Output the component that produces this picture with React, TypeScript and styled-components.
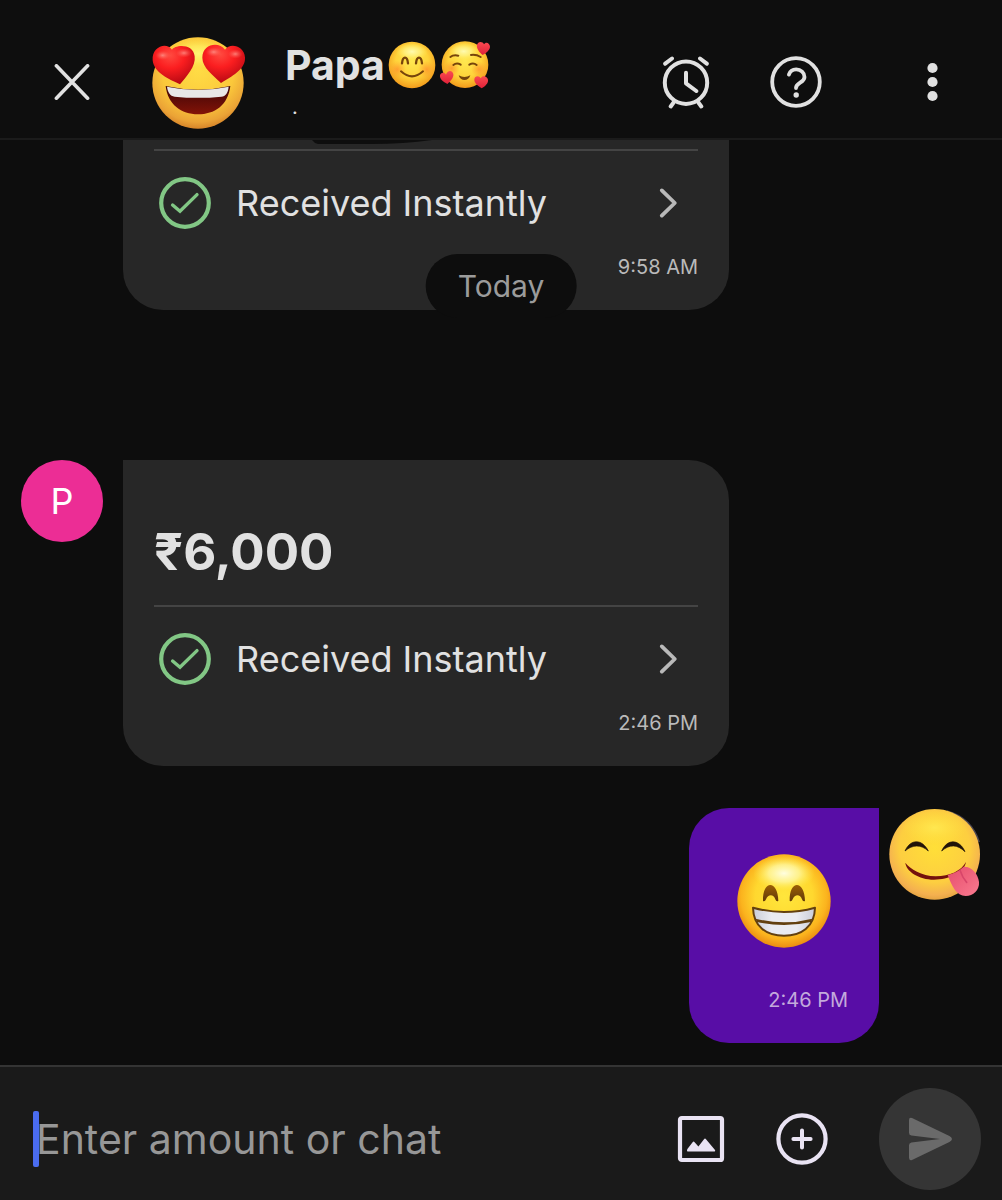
import React from "react";
import styled, { createGlobalStyle } from "styled-components";

const GlobalStyle = createGlobalStyle`
  *, *::before, *::after { box-sizing: border-box; }
  body {
    margin: 0;
    background: #0d0d0d;
    color: #e1e1e1;
    font-family: Inter, "Noto Sans", sans-serif;
  }
  button, input { font: inherit; color: inherit; }
`;

const Screen = styled.div`
  display: flex;
  flex-direction: column;
  height: 100vh;
  overflow: hidden;
`;

/* ---------- Header ---------- */

const Header = styled.header`
  display: flex;
  align-items: center;
  flex: none;
  padding: 34px 32px 8px 34px;
  background: #0e0e0e;
  border-bottom: 2px solid #1b1b1b;
`;

const IconButton = styled.button<{ $width?: number }>`
  display: flex;
  align-items: center;
  justify-content: center;
  flex: none;
  width: ${(p) => p.$width ?? 52}px;
  height: 76px;
  padding: 0;
  border: 0;
  background: none;
  cursor: pointer;
`;

const Contact = styled.div`
  display: flex;
  align-items: flex-start;
  gap: 40px;
  flex: 1;
  min-width: 0;
  margin-left: 41px;
`;

const ContactAvatar = styled.div`
  flex: none;
  padding-top: 2px;
  line-height: 0;
`;

const ContactText = styled.div`
  padding-top: 5px;
`;

const ContactName = styled.h1`
  display: flex;
  align-items: center;
  gap: 3px;
  height: 52px;
  margin: 0;
  font-size: 41px;
  line-height: 52px;
  font-weight: 700;
`;

const ContactStatus = styled.p`
  margin: 0;
  padding-left: 7px;
  font-size: 20px;
  line-height: 32px;
`;

const HeaderActions = styled.div`
  display: flex;
  align-items: center;
  gap: 58px;
`;

const MoreSlot = styled.div`
  margin-left: 14px;
`;

/* ---------- Conversation ---------- */

const Chat = styled.main`
  position: relative;
  display: flex;
  flex-direction: column;
  flex: 1;
  min-height: 0;
  overflow: hidden;
`;

const MessageRow = styled.div<{ $own?: boolean; $gap?: number }>`
  display: flex;
  align-items: flex-start;
  flex: none;
  justify-content: ${(p) => (p.$own ? "flex-end" : "flex-start")};
  gap: ${(p) => (p.$own ? 10 : 20)}px;
  margin-top: ${(p) => p.$gap ?? 0}px;
  padding: 0 21px;
`;

const AvatarSlot = styled.div`
  flex: none;
  width: 82px;
`;

const LetterAvatar = styled.div`
  display: flex;
  align-items: center;
  justify-content: center;
  height: 82px;
  border-radius: 50%;
  background: #ec2d95;
  color: #fff;
  font-size: 36px;
`;

const PaymentCard = styled.article<{ $continued?: boolean }>`
  flex: 1;
  max-width: 606px;
  padding: ${(p) => (p.$continued ? "9px 31px 31px" : "60px 31px 31px")};
  border-radius: ${(p) => (p.$continued ? "0 0 40px 40px" : "0 40px 40px 40px")};
  background: #272727;
`;

const Amount = styled.p`
  margin: 0 0 21px;
  font-size: 51px;
  line-height: 64px;
  font-weight: 700;
`;

const StatusButton = styled.button`
  display: flex;
  align-items: center;
  gap: 25px;
  width: 100%;
  height: 106px;
  padding: 0 19px 0 5px;
  border: 0;
  border-top: 2px solid #444;
  background: none;
  font-size: 36px;
  text-align: left;
  cursor: pointer;
`;

const StatusText = styled.span`
  flex: 1;
`;

const Time = styled.time<{ $own?: boolean }>`
  display: block;
  font-size: 20px;
  line-height: 24px;
  text-align: right;
  color: ${(p) => (p.$own ? "#c3a9dc" : "#bababa")};
`;

const EmojiBubble = styled.article`
  display: flex;
  flex-direction: column;
  gap: 40px;
  min-width: 190px;
  padding: 46px 31px 31px;
  border-radius: 40px 0 40px 40px;
  background: #580da6;
`;

const BubbleEmoji = styled.div`
  display: flex;
  justify-content: center;
  line-height: 0;
`;

const DatePill = styled.div`
  position: absolute;
  top: 114px;
  left: 50%;
  transform: translateX(-50%);
  padding: 0 32px;
  border-radius: 32px;
  background: #0d0d0d;
  color: #9b9b9b;
  font-size: 30px;
  line-height: 64px;
`;

const HeaderShade = styled.svg`
  position: absolute;
  top: 0;
  left: 312px;
`;

/* ---------- Composer ---------- */

const Composer = styled.form`
  display: flex;
  align-items: center;
  flex: none;
  margin: 0;
  padding: 21px 21px 10px 36px;
  border-top: 2px solid #343434;
  background: #1a1a1a;
`;

const InputWrap = styled.label`
  position: relative;
  display: flex;
  flex: 1;
  min-width: 0;
`;

const Caret = styled.span`
  position: absolute;
  left: -3px;
  top: 0;
  width: 6px;
  height: 56px;
  border-radius: 2px;
  background: #4a6cf0;
`;

const MessageInput = styled.input`
  width: 100%;
  height: 56px;
  padding: 0;
  border: 0;
  outline: 0;
  background: none;
  font-size: 41px;
  &::placeholder { color: #979797; opacity: 1; }
`;

const ComposerActions = styled.div`
  display: flex;
  align-items: center;
  gap: 49px;
`;

const SendButton = styled.button`
  display: flex;
  align-items: center;
  justify-content: center;
  width: 102px;
  height: 102px;
  margin-left: 2px;
  padding: 0;
  border: 0;
  border-radius: 50%;
  background: #353535;
`;

/* ---------- Icons ---------- */

const CloseIcon = () => (
  <svg width="36" height="36" viewBox="0 0 36 36" fill="none" stroke="#e1e1e1" strokeWidth="3.6" strokeLinecap="round">
    <path d="M2.4 1.8 33.6 34.2M33.6 1.8 2.4 34.2" />
  </svg>
);

const AlarmIcon = () => (
  <svg width="52" height="54" viewBox="0 0 52 54" fill="none" stroke="#e1e1e1" strokeWidth="4" strokeLinecap="round" strokeLinejoin="round">
    <circle cx="26" cy="27.7" r="21.2" />
    <path d="M26 17.7v10.6l10.3 7.7M5.2 8.7 12 3.5M46.8 8.7 40 3.5M13.6 47.5 10.7 51.5M38.4 47.5 41.3 51.5" />
  </svg>
);

const HelpIcon = () => (
  <svg width="52" height="52" viewBox="0 0 52 52" fill="none" stroke="#e1e1e1" strokeWidth="3.8" strokeLinecap="round" strokeLinejoin="round">
    <circle cx="26" cy="26" r="23.8" />
    <path d="M18.9 18.6c1-3.2 3.8-5.2 7.3-5.2 4.7 0 8.3 3.3 8.3 7.5 0 5.8-8.5 5.7-8.5 11.1" />
    <circle cx="26.2" cy="39" r="2.7" fill="#e1e1e1" stroke="none" />
  </svg>
);

const MoreIcon = () => (
  <svg width="12" height="40" viewBox="0 0 12 40" fill="#e1e1e1">
    <circle cx="6.5" cy="6" r="5.1" />
    <circle cx="6.5" cy="20" r="5.1" />
    <circle cx="6.5" cy="34" r="5.1" />
  </svg>
);

const CheckIcon = () => (
  <svg width="52" height="52" viewBox="0 0 52 52" fill="none" stroke="#82c785">
    <circle cx="26" cy="26" r="23.8" strokeWidth="4.2" />
    <path d="M13.6 28 21 34.3 38 17.6" strokeWidth="3.4" strokeLinecap="round" />
  </svg>
);

const ChevronIcon = () => (
  <svg width="20" height="32" viewBox="0 0 20 32" fill="none" stroke="#b9b9b9" strokeWidth="3.8" strokeLinecap="round" strokeLinejoin="round">
    <path d="M2.8 3.4 15.8 16 2.8 28.6" />
  </svg>
);

const ImageIcon = () => (
  <svg width="48" height="48" viewBox="0 0 48 48">
    <rect x="3" y="3" width="42" height="42" rx="1.8" fill="none" stroke="#e9e3f3" strokeWidth="4.2" />
    <path d="m10.4 34 5.2-6.8q1-1.2 2 0l3.8 4.3 5.6-7.3q1-1.2 2 0l8.8 10.6q1.2 1.8-1 1.8H11.4q-2.2 0-1-2.6Z" fill="#e9e3f3" />
  </svg>
);

const PlusIcon = () => (
  <svg width="52" height="52" viewBox="0 0 52 52" fill="none" stroke="#e9e3f3" strokeLinecap="round">
    <circle cx="26" cy="26" r="23.6" strokeWidth="4.2" />
    <path d="M26 17.4v17.2M17.4 26h17.2" strokeWidth="4" />
  </svg>
);

const SendIcon = () => (
  <svg width="44" height="44" viewBox="0 0 44 44" fill="#6a6a6a">
    <path d="M1 3.2Q1 0 4 1l37.4 18q2.6 1.4 2.6 3t-2.6 3L4 43q-3 1-3-2.2V28.2q0-2.4 2.4-2.8L32 22 3.4 18.6Q1 18.2 1 15.8Z" />
  </svg>
);

/* ---------- Emoji ---------- */

const HeartEyesEmoji = () => (
  <svg width="94" height="94" viewBox="453 107 282 282" role="img" aria-label="Smiling face with heart eyes">
    <defs>
      <radialGradient id="he-face" cx="50%" cy="36%" r="66%">
        <stop offset="0" stopColor="#ffdc45" />
        <stop offset=".6" stopColor="#fbc83b" />
        <stop offset=".86" stopColor="#eba336" />
        <stop offset="1" stopColor="#d17c26" />
      </radialGradient>
      <radialGradient id="he-heart" cx="42%" cy="25%" r="75%">
        <stop offset="0" stopColor="#ff4a40" />
        <stop offset=".45" stopColor="#fb1e20" />
        <stop offset="1" stopColor="#b90913" />
      </radialGradient>
      <radialGradient id="he-shine">
        <stop offset="0" stopColor="#fff573" />
        <stop offset=".5" stopColor="#ffef62" stopOpacity=".7" />
        <stop offset="1" stopColor="#ffe24b" stopOpacity="0" />
      </radialGradient>
      <radialGradient id="he-glint">
        <stop offset="0" stopColor="#ffb0a4" stopOpacity=".65" />
        <stop offset="1" stopColor="#ff6a5c" stopOpacity="0" />
      </radialGradient>
      <linearGradient id="he-mouth" x1="0" y1="0" x2="0" y2="1">
        <stop offset="0" stopColor="#3c0508" />
        <stop offset="1" stopColor="#831307" />
      </linearGradient>
    </defs>
    <circle cx="594" cy="248" r="137" fill="url(#he-face)" />
    <ellipse cx="594" cy="160" rx="90" ry="46" fill="url(#he-shine)" />
    <path d="M497 257q97 22 194 0c-7 58-47 85-97 85s-91-30-97-85Z" fill="url(#he-mouth)" />
    <path d="M501 259q93 20 185 0c-2 19-9 29-22 30q-70 7-140 0c-14-2-21-14-23-30Z" fill="#e8e7e7" />
    <path d="M540 252c-32-14-79-36-82-72-3-42 42-56 58-32 6-14 64-22 68 20 4 31-24 60-44 84Z" fill="url(#he-heart)" />
    <path d="M663 248c-23-23-56-46-56-76 0-42 50-50 68-24 16-24 62-10 60 28-1 32-40 52-72 72Z" fill="url(#he-heart)" />
    <g fill="url(#he-glint)">
      <ellipse cx="488" cy="165" rx="22" ry="14" />
      <ellipse cx="552" cy="158" rx="24" ry="14" />
      <ellipse cx="641" cy="155" rx="24" ry="14" />
      <ellipse cx="706" cy="161" rx="22" ry="14" />
    </g>
  </svg>
);

const SmileEmoji = () => (
  <svg width="48" height="48" viewBox="384 124 144 144" role="img" aria-label="Smiling face">
    <defs>
      <radialGradient id="sm-face" cx="50%" cy="42%" r="58%">
        <stop offset="0" stopColor="#ffe850" />
        <stop offset=".6" stopColor="#ffd33a" />
        <stop offset="1" stopColor="#f29a1b" />
      </radialGradient>
      <radialGradient id="sm-shine">
        <stop offset="0" stopColor="#fffbb0" />
        <stop offset=".5" stopColor="#fff58a" stopOpacity=".7" />
        <stop offset="1" stopColor="#ffec60" stopOpacity="0" />
      </radialGradient>
      <radialGradient id="sm-blush">
        <stop offset="0" stopColor="#ff8a2c" stopOpacity=".7" />
        <stop offset="1" stopColor="#ff9a2c" stopOpacity="0" />
      </radialGradient>
    </defs>
    <circle cx="456" cy="196" r="70" fill="url(#sm-face)" />
    <ellipse cx="456" cy="156" rx="48" ry="26" fill="url(#sm-shine)" />
    <circle cx="412" cy="209" r="26" fill="url(#sm-blush)" />
    <circle cx="500" cy="209" r="26" fill="url(#sm-blush)" />
    <path d="M426 191c2-23 16-23 18 0M468 191c2-23 16-23 18 0" fill="none" stroke="#77450b" strokeWidth="7" strokeLinecap="round" />
    <path d="M423 215q33 30 66 0" fill="none" stroke="#77450b" strokeWidth="6" strokeLinecap="round" />
  </svg>
);

const LoveEmoji = () => (
  <svg width="52" height="50" viewBox="540 122 156 150" role="img" aria-label="Smiling face with hearts">
    <defs>
      <linearGradient id="lv-heart" x1="0" y1="0" x2="0" y2="1">
        <stop offset="0" stopColor="#fb4a51" />
        <stop offset="1" stopColor="#df2038" />
      </linearGradient>
    </defs>
    <circle cx="618" cy="196" r="70" fill="url(#sm-face)" />
    <ellipse cx="614" cy="156" rx="46" ry="26" fill="url(#sm-shine)" />
    <circle cx="578" cy="207" r="24" fill="url(#sm-blush)" />
    <circle cx="660" cy="210" r="24" fill="url(#sm-blush)" />
    <g fill="none" stroke="#77450b" strokeWidth="6" strokeLinecap="round">
      <path d="M574 173q9-7 24-4M636 167q16-2 29 6M583 197q10-8 22-1M631 196q12-7 22 1" />
    </g>
    <path d="M599 228q17 10 35 0c-4 19-31 19-35 0Z" fill="#77450b" />
    <g fill="url(#lv-heart)">
      <path d="M671 167c-10-8-19-19-17-30 3-12 17-11 21-2 5-10 18-4 18 7 0 10-12 19-22 25Z" />
      <path d="M565 254c-12-6-24-15-22-26 2-10 14-10 18-2 4-14 19-15 22-2 2 11-10 23-18 30Z" />
      <path d="M668 267c-12-8-23-16-22-27 1-12 15-12 19-3 5-10 20-7 22 4 2 10-9 20-19 26Z" />
    </g>
  </svg>
);

const GrinEmoji = () => (
  <svg width="94" height="94" viewBox="175 194 282 282" role="img" aria-label="Beaming face">
    <defs>
      <radialGradient id="gr-face" cx="50%" cy="45%" r="56%">
        <stop offset="0" stopColor="#ffe63c" />
        <stop offset=".55" stopColor="#ffd82f" />
        <stop offset=".82" stopColor="#fbb31e" />
        <stop offset="1" stopColor="#e98710" />
      </radialGradient>
      <radialGradient id="gr-shine">
        <stop offset="0" stopColor="#fffee0" />
        <stop offset=".5" stopColor="#fff9a8" stopOpacity=".75" />
        <stop offset="1" stopColor="#ffed55" stopOpacity="0" />
      </radialGradient>
      <linearGradient id="gr-eye" x1="0" y1="0" x2="0" y2="1">
        <stop offset="0" stopColor="#9b5e05" />
        <stop offset="1" stopColor="#62390a" />
      </linearGradient>
      <linearGradient id="gr-teeth" x1="0" y1="0" x2="1" y2="0">
        <stop offset="0" stopColor="#c9ccd8" />
        <stop offset=".3" stopColor="#eaebf1" />
        <stop offset=".7" stopColor="#eaebf1" />
        <stop offset="1" stopColor="#c9ccd8" />
      </linearGradient>
    </defs>
    <circle cx="316" cy="335" r="140" fill="url(#gr-face)" />
    <ellipse cx="316" cy="252" rx="92" ry="52" fill="url(#gr-shine)" />
    <path d="M253 335c-2-64 45-64 46 0-5 3-7-1-9-5-5-16-22-16-28 0-2 5-5 7-9 5ZM333 335c-2-64 45-64 46 0-5 3-7-1-9-5-5-16-22-16-28 0-2 5-5 7-9 5Z" fill="url(#gr-eye)" />
    <path d="M223 355q93 26 186 0c-1 58-42 84-93 84s-92-26-93-84Z" fill="url(#gr-teeth)" stroke="#63400f" strokeWidth="6" strokeLinejoin="round" />
    <path d="M231 388q85 22 170 0l-4 10q-81 18-162 0Z" fill="#63400f" />
  </svg>
);

const TongueEmoji = () => (
  <svg width="92" height="94" viewBox="626 51 276 282" role="img" aria-label="Face savoring food">
    <defs>
      <radialGradient id="tg-face" cx="50%" cy="42%" r="60%">
        <stop offset="0" stopColor="#ffdf38" />
        <stop offset=".65" stopColor="#fdce40" />
        <stop offset=".88" stopColor="#f4b050" />
        <stop offset="1" stopColor="#dfa03c" />
      </radialGradient>
      <radialGradient id="tg-shine">
        <stop offset="0" stopColor="#ffe750" />
        <stop offset="1" stopColor="#ffe040" stopOpacity="0" />
      </radialGradient>
      <linearGradient id="tg-tongue" x1="0" y1="0" x2="1" y2="1">
        <stop offset="0" stopColor="#e54d6b" />
        <stop offset="1" stopColor="#fa7a90" />
      </linearGradient>
    </defs>
    <path d="M800 58q75 20 99 95l-14-2q-20-60-85-86Z" fill="#4b4650" />
    <circle cx="763" cy="190" r="136" fill="url(#tg-face)" />
    <ellipse cx="763" cy="110" rx="98" ry="50" fill="url(#tg-shine)" />
    <path d="M674 180c17-38 52-36 70 0-22-20-47-20-70 0ZM784 180c17-38 53-36 70 2-23-22-46-23-70-2Z" fill="#211409" stroke="#211409" strokeWidth="2" />
    <path d="M675 215c2 25 40 51 86 51 44 0 90-19 96-53-14 26-48 43-91 43-43-1-76-22-91-41Z" fill="#74110d" />
    <path d="M802 252c18-5 34-12 48-25 24-1 44 22 46 46 2 24-17 42-40 42-28 0-41-29-54-63Z" fill="url(#tg-tongue)" />
    <path d="M839 238q7 22 20 36" fill="none" stroke="#d8466a" strokeWidth="5" strokeLinecap="round" />
  </svg>
);

/* ---------- Composition ---------- */

const PaymentStatus = ({ time }: { time: string }) => (
  <>
    <StatusButton type="button">
      <CheckIcon />
      <StatusText>Received Instantly</StatusText>
      <ChevronIcon />
    </StatusButton>
    <Time>{time}</Time>
  </>
);

export default function App() {
  return (
    <Screen>
      <GlobalStyle />
      <Header>
        <IconButton type="button" aria-label="Close" $width={76}>
          <CloseIcon />
        </IconButton>
        <Contact>
          <ContactAvatar>
            <HeartEyesEmoji />
          </ContactAvatar>
          <ContactText>
            <ContactName>
              Papa
              <SmileEmoji />
              <LoveEmoji />
            </ContactName>
            <ContactStatus>.</ContactStatus>
          </ContactText>
        </Contact>
        <HeaderActions>
          <IconButton type="button" aria-label="Reminders">
            <AlarmIcon />
          </IconButton>
          <IconButton type="button" aria-label="Help">
            <HelpIcon />
          </IconButton>
          <MoreSlot>
            <IconButton type="button" aria-label="More options" $width={76}>
              <MoreIcon />
            </IconButton>
          </MoreSlot>
        </HeaderActions>
      </Header>

      <Chat>
        <MessageRow>
          <AvatarSlot />
          <PaymentCard $continued>
            <PaymentStatus time="9:58 AM" />
          </PaymentCard>
        </MessageRow>

        <MessageRow $gap={150}>
          <AvatarSlot>
            <LetterAvatar>P</LetterAvatar>
          </AvatarSlot>
          <PaymentCard>
            <Amount>₹6,000</Amount>
            <PaymentStatus time="2:46 PM" />
          </PaymentCard>
        </MessageRow>

        <MessageRow $own $gap={42}>
          <EmojiBubble>
            <BubbleEmoji>
              <GrinEmoji />
            </BubbleEmoji>
            <Time $own>2:46 PM</Time>
          </EmojiBubble>
          <TongueEmoji />
        </MessageRow>

        <HeaderShade width="120" height="4" viewBox="0 0 120 4" aria-hidden="true">
          <path d="M0 0h120Q92 4 60 4H6Q2 3 0 0Z" fill="#0e0e0e" />
        </HeaderShade>
        <DatePill>Today</DatePill>
      </Chat>

      <Composer onSubmit={(e) => e.preventDefault()}>
        <InputWrap>
          <Caret />
          <MessageInput type="text" placeholder="Enter amount or chat" aria-label="Enter amount or chat" />
        </InputWrap>
        <ComposerActions>
          <IconButton type="button" aria-label="Attach image">
            <ImageIcon />
          </IconButton>
          <IconButton type="button" aria-label="Add">
            <PlusIcon />
          </IconButton>
          <SendButton type="submit" aria-label="Send">
            <SendIcon />
          </SendButton>
        </ComposerActions>
      </Composer>
    </Screen>
  );
}
